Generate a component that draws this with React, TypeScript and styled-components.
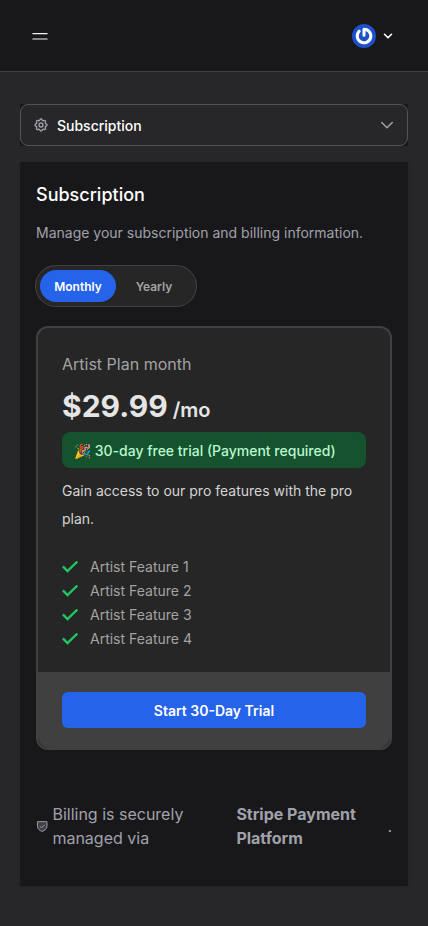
import React, { useState } from "react";
import styled, { createGlobalStyle } from "styled-components";
import { HiOutlineCog } from "react-icons/hi";

const GlobalStyle = createGlobalStyle`
  *, *::before, *::after { box-sizing: border-box; }
  body {
    margin: 0;
    background: #27272a;
    color: #fff;
    font-family: Inter, "Noto Sans", sans-serif;
    font-size: 16px;
    line-height: 24px;
  }
  h1, h2, p, ul { margin: 0; padding: 0; }
  button, select { font: inherit; color: inherit; }
  button { cursor: pointer; border: 0; padding: 0; background: none; }
  svg { display: block; }
`;

const Page = styled.div`
  display: flex;
  flex-direction: column;
  min-height: 100vh;
`;

const Header = styled.header`
  display: flex;
  align-items: center;
  justify-content: space-between;
  height: 72px;
  padding: 0 32px 0 28px;
  background: #18181b;
  border-bottom: 1px solid #3f3f46;
`;

const IconButton = styled.button`
  display: flex;
  padding: 2px;
  color: #f4f4f5;
`;

const UserButton = styled.button`
  display: flex;
  align-items: center;
  gap: 4px;
  color: #fff;
`;

const Main = styled.main`
  display: flex;
  flex-direction: column;
  gap: 16px;
  padding: 32px 20px 40px;
`;

const SelectField = styled.div`
  position: relative;
  background: #18181b;
`;

const Select = styled.select`
  display: block;
  width: 100%;
  height: 42px;
  padding: 2px 40px 0 36px;
  appearance: none;
  background: #27272a;
  border: 1px solid #52525b;
  border-radius: 8px;
  font-size: 14px;
  font-weight: 500;
  line-height: 20px;
`;

const SelectIcon = styled.span<{ $side: "left" | "right" }>`
  position: absolute;
  top: 0;
  bottom: 0;
  ${({ $side }) => ($side === "left" ? "left: 13px;" : "right: 9px;")}
  display: flex;
  align-items: center;
  color: #a1a1aa;
  pointer-events: none;
`;

const Panel = styled.section`
  padding: 20px 16px 36px;
  background: #18181b;
  box-shadow: 0 1px 3px rgba(0, 0, 0, 0.1);
`;

const Title = styled.h1`
  font-size: 18px;
  line-height: 26px;
  font-weight: 500;
`;

const Lead = styled.p`
  margin-top: 14px;
  font-size: 14px;
  line-height: 22px;
  color: #a1a1aa;
`;

const Toggle = styled.div`
  display: inline-grid;
  grid-template-columns: 1fr 1fr;
  margin-top: 22px;
  padding: 4px;
  border-radius: 20px;
  background: #262626;
  box-shadow: 0 0 0 1px #404040;
  vertical-align: top;
`;

const ToggleOption = styled.button<{ $active: boolean }>`
  min-width: 76px;
  height: 32px;
  padding: 2px 13px 0;
  border-radius: 16px;
  font-size: 12px;
  font-weight: 600;
  line-height: 16px;
  color: ${({ $active }) => ($active ? "#fff" : "#a3a3a3")};
  background: ${({ $active }) => ($active ? "#2563eb" : "transparent")};
`;

const Card = styled.article`
  margin-top: 20px;
  background: #262626;
  border: 2px solid #404040;
  border-radius: 12px;
`;

const CardBody = styled.div`
  padding: 24px 24px 21px;
`;

const PlanName = styled.h2`
  font-size: 16px;
  line-height: 24px;
  font-weight: 400;
  color: #a3a3a3;
`;

const Price = styled.p`
  display: flex;
  align-items: baseline;
  gap: 5px;
  margin-top: 12px;
  font-size: 30px;
  line-height: 36px;
  font-weight: 700;
  color: #e5e5e5;
`;

const Period = styled.span`
  font-size: 20px;
  line-height: 28px;
  font-weight: 600;
`;

const TrialNote = styled.p`
  margin-top: 8px;
  padding: 9px 12px 7px;
  border-radius: 8px;
  background: #14532d;
  color: #bbf7d0;
  font-size: 14px;
  line-height: 20px;
  font-weight: 500;
`;

const Summary = styled.p`
  margin-top: 9px;
  font-size: 14px;
  line-height: 28px;
  color: #d4d4d4;
`;

const Features = styled.ul`
  margin-top: 22px;
  list-style: none;
`;

const Feature = styled.li`
  display: flex;
  align-items: center;
  gap: 12px;
  font-size: 14px;
  line-height: 24px;
  color: #a3a3a3;
`;

const CardFooter = styled.footer`
  padding: 20px 24px;
  background: #404040;
  border-radius: 0 0 12px 12px;
`;

const PrimaryButton = styled.button`
  display: block;
  width: 100%;
  height: 36px;
  padding-top: 2px;
  border-radius: 6px;
  background: #2563eb;
  color: #fff;
  font-size: 14px;
  font-weight: 600;
`;

const BillingNote = styled.div`
  display: flex;
  align-items: center;
  gap: 4px;
  margin-top: 52px;
  color: #a1a1aa;

  strong { font-weight: 700; }
`;

function MenuIcon() {
  return (
    <svg width="20" height="20" viewBox="0 0 20 20" fill="none" stroke="currentColor" strokeWidth="1.2" strokeLinecap="round">
      <path d="M2.9 7.6h14.2M2.9 13h14.2" />
    </svg>
  );
}

function Avatar() {
  return (
    <svg width="24" height="24" viewBox="0 0 24 24" fill="none">
      <circle cx="12" cy="12" r="12" fill="#1e50c8" />
      <path
        d="M12 11.3V5.2A6.8 6.8 0 1 1 7.2 7.2"
        stroke="#fff"
        strokeWidth="3"
        strokeLinecap="round"
        strokeLinejoin="round"
      />
    </svg>
  );
}

function Chevron({ size, weight }: { size: number; weight: number }) {
  return (
    <svg width={size} height={size} viewBox="0 0 16 16" fill="none" stroke="currentColor" strokeWidth={weight} strokeLinecap="round" strokeLinejoin="round">
      <path d="m4.5 6.3 3.5 3.5 3.5-3.5" />
    </svg>
  );
}

function CheckIcon() {
  return (
    <svg width="16" height="16" viewBox="0 0 16 16" fill="none" stroke="#22c55e" strokeWidth="2.4">
      <path d="m.8 7.4 4.7 4.6L15.3 2.6" />
    </svg>
  );
}

function ShieldIcon() {
  return (
    <svg width="16" height="16" viewBox="0 0 12 12" fill="none" stroke="currentColor">
      <path d="M1.4 1.8h9.2v4.4c0 2.5-2.1 4.1-4.6 5.1-2.5-1-4.6-2.6-4.6-5.1Z" fill="#3f3f46" strokeWidth=".9" />
      <path d="m3.8 6.2 1.6 1.6 2.9-3" strokeWidth=".9" />
    </svg>
  );
}

const features = ["Artist Feature 1", "Artist Feature 2", "Artist Feature 3", "Artist Feature 4"];
const periods = ["Monthly", "Yearly"];

export default function App() {
  const [period, setPeriod] = useState("Monthly");
  return (
    <Page>
      <GlobalStyle />
      <Header>
        <IconButton type="button" aria-label="Open menu"><MenuIcon /></IconButton>
        <UserButton type="button" aria-label="Account">
          <Avatar />
          <Chevron size={16} weight={1.6} />
        </UserButton>
      </Header>
      <Main>
        <SelectField>
          <SelectIcon $side="left"><HiOutlineCog size={16} /></SelectIcon>
          <Select aria-label="Settings section" defaultValue="Subscription">
            <option>Subscription</option>
          </Select>
          <SelectIcon $side="right"><Chevron size={24} weight={1} /></SelectIcon>
        </SelectField>
        <Panel>
          <Title>Subscription</Title>
          <Lead>Manage your subscription and billing information.</Lead>
          <Toggle role="group" aria-label="Billing period">
            {periods.map((name) => (
              <ToggleOption
                key={name}
                type="button"
                $active={period === name}
                aria-pressed={period === name}
                onClick={() => setPeriod(name)}
              >
                {name}
              </ToggleOption>
            ))}
          </Toggle>
          <Card>
            <CardBody>
              <PlanName>Artist Plan month</PlanName>
              <Price>$29.99<Period>/mo</Period></Price>
              <TrialNote>🎉 30-day free trial (Payment required)</TrialNote>
              <Summary>Gain access to our pro features with the pro plan.</Summary>
              <Features>
                {features.map((name) => (
                  <Feature key={name}><CheckIcon />{name}</Feature>
                ))}
              </Features>
            </CardBody>
            <CardFooter>
              <PrimaryButton type="button">Start 30-Day Trial</PrimaryButton>
            </CardFooter>
          </Card>
          <BillingNote>
            <ShieldIcon />
            <span>Billing is securely managed via</span>
            <strong>Stripe Payment Platform</strong>
            <span>.</span>
          </BillingNote>
        </Panel>
      </Main>
    </Page>
  );
}
